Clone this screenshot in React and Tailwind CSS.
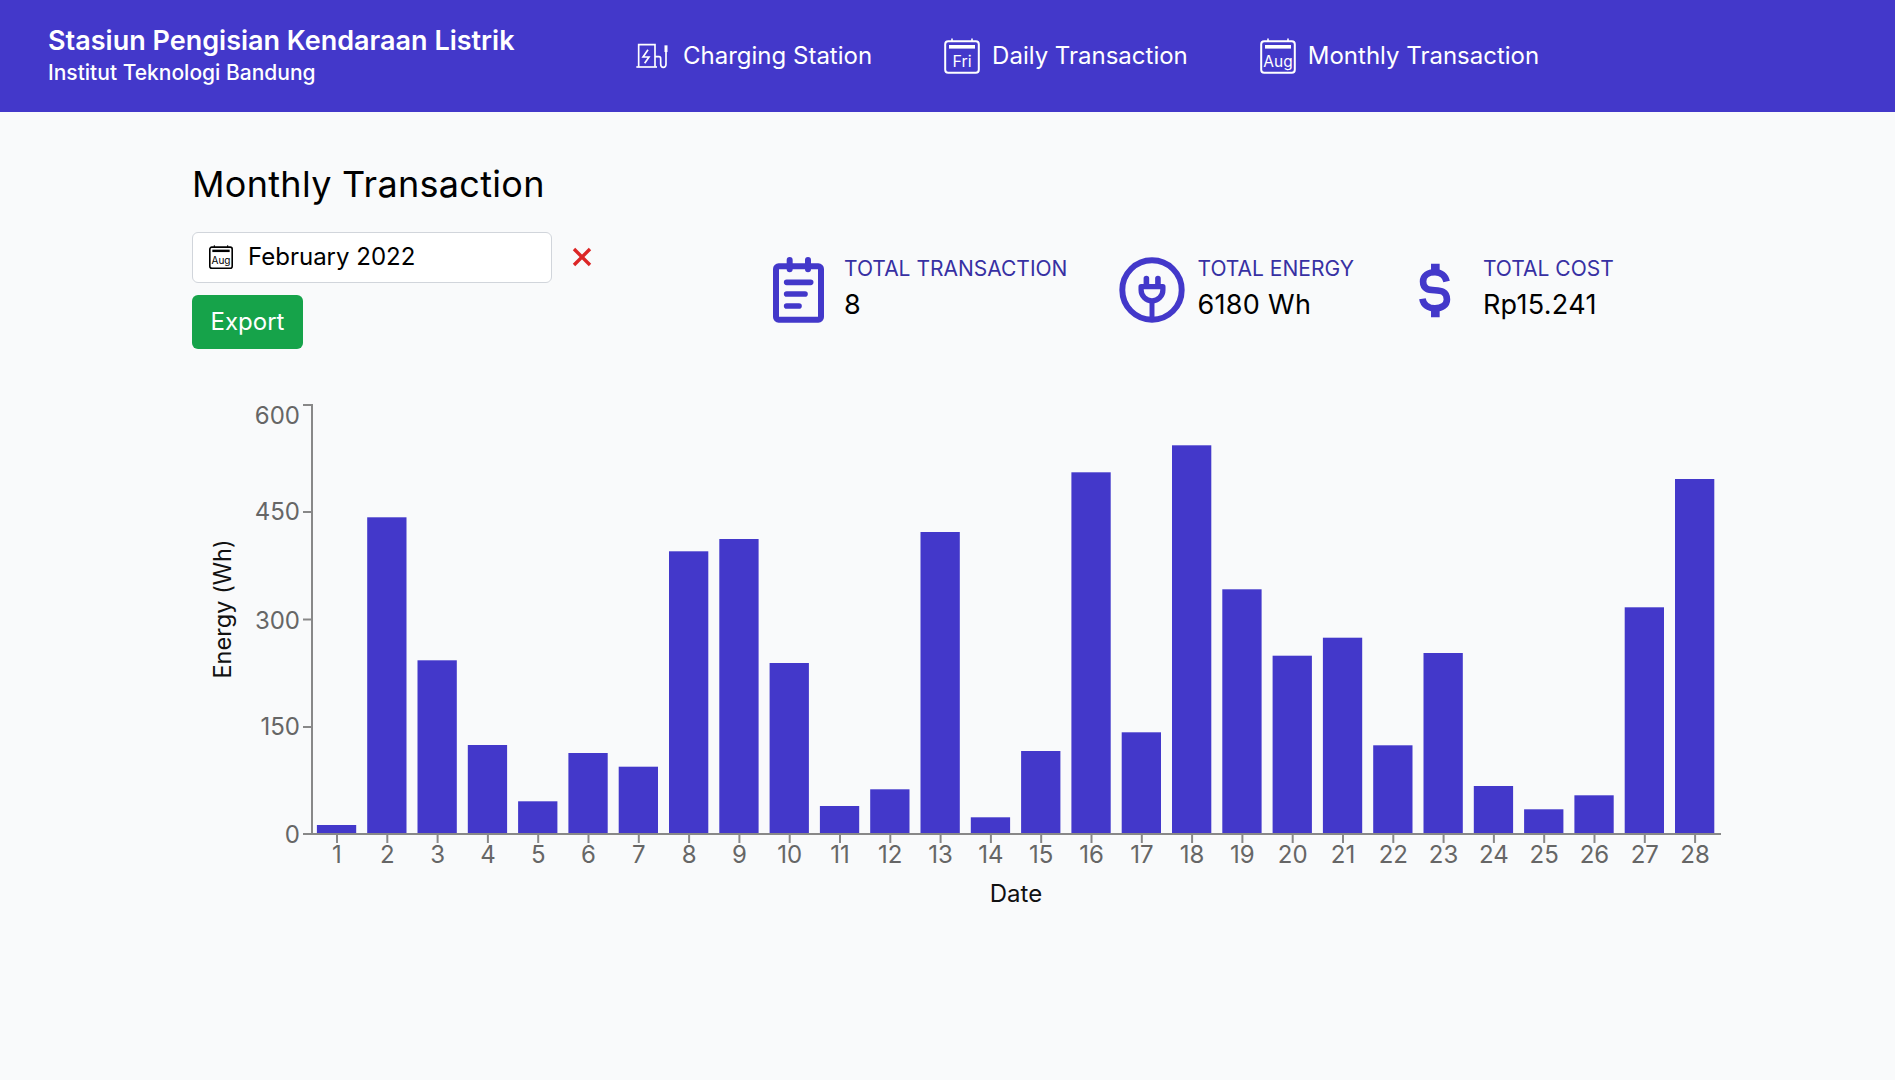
import React from 'react';

const font = { fontFamily: 'Inter, sans-serif' };

const barTops = [825, 517.3, 660.3, 745, 801.3, 753, 766.7, 551.3, 539, 663, 806, 789.3, 532, 817.3, 751, 472.3, 732.3, 445.3, 589.3, 655.7, 637.7, 745.3, 653, 786, 809.3, 795.3, 607.3, 479];
const yTicks = [
  { label: '600', y: 405, textY: 415 },
  { label: '450', y: 512, textY: 511 },
  { label: '300', y: 619.5, textY: 620 },
  { label: '150', y: 727, textY: 726 },
  { label: '0', y: 834, textY: 834 },
];
const BASE = 834;

function ChargingIcon() {
  return (
    <svg viewBox="0 0 150 120" className="w-[50px] h-[40px] -mx-[8px]" fill="none" stroke="currentColor">
      <path d="M29 92V26H78V92" strokeWidth="5" />
      <path d="M22 93H84" strokeWidth="5" />
      <path d="M57 41L42 63H60L47 82" strokeWidth="5" />
      <path d="M78 62H90Q95 62 95 68V84Q95 94 103 94Q111 94 111 84V46" strokeWidth="5" />
      <path d="M111 28V48" strokeWidth="9" />
    </svg>
  );
}

function CalendarIcon({ label, className, size, stroke = 2 }) {
  return (
    <svg viewBox="0 0 36 36" className={className} fill="none" stroke="currentColor">
      <rect x="1.2" y="3.2" width="33.6" height="31.6" rx="3" strokeWidth={stroke} />
      <path d="M8 0.5V3M28 0.5V3" strokeWidth="1.6" />
      <rect x="5" y="7" width="26" height="3.6" fill="currentColor" stroke="none" />
      <text x="18" y="28.5" textAnchor="middle" fill="currentColor" stroke="none" fontSize={size} style={font}>{label}</text>
    </svg>
  );
}

function NoteIcon() {
  return (
    <svg viewBox="70 52 153 196" className="w-[51px] h-[66px] shrink-0" fill="none" stroke="#4338ca" strokeLinecap="round">
      <rect x="79" y="79" width="135" height="160" rx="8" strokeWidth="18" />
      <path d="M120 60V88M175 60V88" strokeWidth="18" />
      <path d="M111 127H183M111 162H166M111 198H148" strokeWidth="17" />
    </svg>
  );
}

function PlugIcon() {
  return (
    <svg viewBox="25 18 200 200" className="w-[66px] h-[66px] shrink-0" fill="none" stroke="#4338ca">
      <circle cx="125" cy="118" r="90" strokeWidth="18" />
      <path d="M108 83V105M143 83V105" strokeWidth="17" strokeLinecap="round" />
      <path d="M92 108H158V118A33 33 0 0 1 92 118Z" strokeWidth="16" strokeLinejoin="round" />
      <path d="M125 150V206" strokeWidth="15" />
    </svg>
  );
}

function DollarIcon() {
  return (
    <svg viewBox="88 68 96 166" className="w-[32px] h-[55px] shrink-0 mt-[6px]" fill="none" stroke="#4338ca">
      <path d="M137 70V96M137 204V232" strokeWidth="26" />
      <path d="M171 124C167 106 153 96 136 96C116 96 100 106 100 124C100 172 172 128 172 178C172 195 156 205 136 205C116 205 101 195 98 176" strokeWidth="20" />
    </svg>
  );
}

function Stat({ icon, label, value, className }) {
  return (
    <div className={className}>
      {icon}
      <div className="-mt-[2px]">
        <div className="text-[21px] leading-[28px] text-[#3730a3] font-normal">{label}</div>
        <div className="text-[27px] leading-[36px] tracking-[0.3px] text-black mt-[4px]">{value}</div>
      </div>
    </div>
  );
}

function Chart() {
  return (
    <svg viewBox="192 390 1540 530" className="w-[1540px] h-[530px] block mt-[41px]" style={font}>
      {barTops.map((top, i) => (
        <rect key={i} x={316.9 + 50.3 * i} y={top} width={39.3} height={BASE - top} fill="#4338ca" />
      ))}
      <path d="M303 405H312V834" fill="none" stroke="#888" strokeWidth="2" />
      <path d="M303 834H1721" fill="none" stroke="#888" strokeWidth="2" />
      {yTicks.map((t) => (
        <g key={t.label}>
          <path d={`M303 ${t.y}H312`} stroke="#888" strokeWidth="2" />
          <text x="300" y={t.textY} textAnchor="end" dominantBaseline="central" fontSize="24" fill="#666">{t.label}</text>
        </g>
      ))}
      {barTops.map((_, i) => (
        <g key={i}>
          <path d={`M${337 + 50.3 * i} 835V843`} stroke="#888" strokeWidth="2" />
          <text x={337 + 50.3 * i} y="854" textAnchor="middle" dominantBaseline="central" fontSize="24" fill="#666">{i + 1}</text>
        </g>
      ))}
      <text x="1016" y="893" textAnchor="middle" dominantBaseline="central" fontSize="24" fill="#111">Date</text>
      <text transform="translate(222 609) rotate(-90)" textAnchor="middle" dominantBaseline="central" fontSize="23.6" fill="#111">Energy (Wh)</text>
    </svg>
  );
}

export default function App() {
  return (
    <div className="min-h-screen bg-[#f9fafb]" style={font}>
      {/* Header */}
      <header className="h-[112px] bg-[#4338ca] text-white flex items-center pl-[48px]">
        <div className="w-[589px] -mt-[2px]">
          <div className="text-[27px] leading-[36px] font-semibold">Stasiun Pengisian Kendaraan Listrik</div>
          <div className="text-[21px] leading-[28px] font-medium">Institut Teknologi Bandung</div>
        </div>
        <nav className="flex items-center gap-[72px] text-[24px]">
          <div className="flex items-center gap-[12px]"><ChargingIcon /><span>Charging Station</span></div>
          <div className="flex items-center gap-[12px]"><CalendarIcon label="Fri" size="16" className="w-[36px] h-[36px]" /><span>Daily Transaction</span></div>
          <div className="flex items-center gap-[12px]"><CalendarIcon label="Aug" size="15.5" className="w-[36px] h-[36px]" /><span>Monthly Transaction</span></div>
        </nav>
      </header>

      <main className="pl-[192px] pt-[48px]">
        <h2 className="text-[36px] leading-[48px] font-normal tracking-[0.3px] text-black">Monthly Transaction</h2>

        <div className="flex mt-[24px]">
          {/* Filter */}
          <div className="w-[581px] shrink-0">
            <div className="flex items-center">
              <div className="w-[360px] h-[51px] bg-white border border-[#d1d5db] rounded-[6px] flex items-center pl-[16px] pb-[1px] text-[24px] text-black">
                <CalendarIcon label="Aug" size="15" stroke={2.4} className="w-[24px] h-[24px] mr-[15px]" />
                February 2022
              </div>
              <span className="ml-[20px] -mt-[1px] text-[#dc2626]">
                <svg viewBox="0 0 20 20" className="w-[20px] h-[20px]" fill="none" stroke="currentColor" strokeWidth="3.4"><path d="M2 2L18 18M18 2L2 18" /></svg>
              </span>
            </div>
            <button className="mt-[12px] w-[111px] h-[54px] bg-[#16a34a] rounded-[6px] text-white text-[24px]">Export</button>
          </div>

          {/* Stats */}
          <Stat className="flex gap-[20px] items-start mt-[25px]" icon={<NoteIcon />} label="TOTAL TRANSACTION" value="8" />
          <Stat className="flex gap-[12px] items-start mt-[25px] ml-[52px]" icon={<PlugIcon />} label="TOTAL ENERGY" value="6180 Wh" />
          <Stat className="flex gap-[32px] items-start mt-[25px] ml-[65px]" icon={<DollarIcon />} label="TOTAL COST" value="Rp15.241" />
        </div>

        <Chart />
      </main>
    </div>
  );
}
